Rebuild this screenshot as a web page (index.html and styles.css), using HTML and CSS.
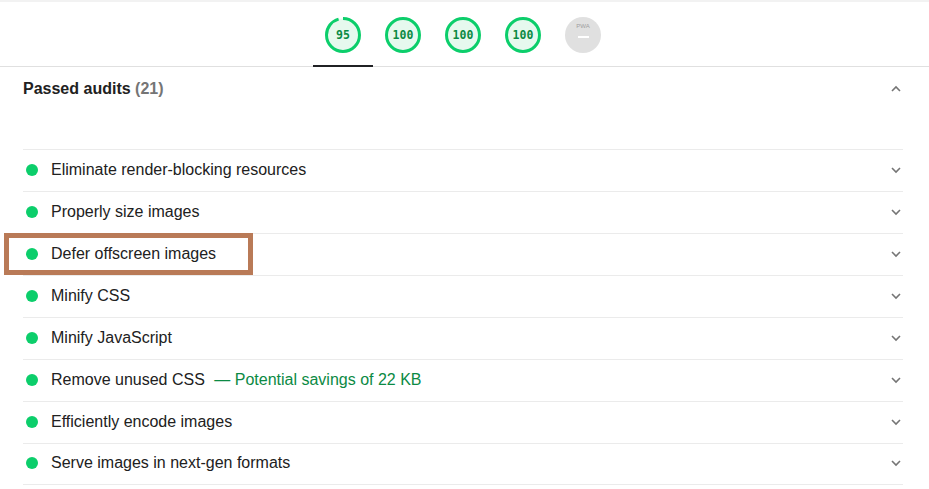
FILE: index.html
```html
<!DOCTYPE html>
<html>
<head>
<meta charset="utf-8">
<link rel="stylesheet" href="styles.css">
</head>
<body>
<div class="topstrip"></div>
<nav class="gauges">
  <div class="gauge-tab active">
    <svg class="gauge" viewBox="0 0 36 36" width="36" height="36">
      <circle cx="18" cy="18" r="16.5" fill="#e6f9ee"/>
      <circle cx="18" cy="18" r="16.5" fill="none" stroke="#0cce6b" stroke-width="3" stroke-dasharray="98.5 200" transform="rotate(-90 18 18)"/>
    </svg>
    <span class="gauge-num">95</span>
  </div>
  <div class="gauge-tab">
    <svg class="gauge" viewBox="0 0 36 36" width="36" height="36">
      <circle cx="18" cy="18" r="16.5" fill="#e6f9ee" stroke="#0cce6b" stroke-width="3"/>
    </svg>
    <span class="gauge-num">100</span>
  </div>
  <div class="gauge-tab">
    <svg class="gauge" viewBox="0 0 36 36" width="36" height="36">
      <circle cx="18" cy="18" r="16.5" fill="#e6f9ee" stroke="#0cce6b" stroke-width="3"/>
    </svg>
    <span class="gauge-num">100</span>
  </div>
  <div class="gauge-tab">
    <svg class="gauge" viewBox="0 0 36 36" width="36" height="36">
      <circle cx="18" cy="18" r="16.5" fill="#e6f9ee" stroke="#0cce6b" stroke-width="3"/>
    </svg>
    <span class="gauge-num">100</span>
  </div>
  <div class="gauge-tab">
    <div class="pwa">
      <span class="pwa-label">PWA</span>
      <span class="pwa-dash"></span>
    </div>
  </div>
</nav>

<section class="audits">
  <header class="audits-head">
    <h2 class="audits-title">Passed audits <span class="count">(21)</span></h2>
    <svg class="chev" width="12" height="8" viewBox="0 0 12 8"><path d="M2 6 L6 2 L10 6" fill="none" stroke="#757575" stroke-width="1.6"/></svg>
  </header>
  <ul class="audit-list">
    <li class="audit"><span class="dot"></span><span class="label">Eliminate render-blocking resources</span><svg class="chev" width="12" height="8" viewBox="0 0 12 8"><path d="M2 2 L6 6 L10 2" fill="none" stroke="#757575" stroke-width="1.6"/></svg></li>
    <li class="audit"><span class="dot"></span><span class="label">Properly size images</span><svg class="chev" width="12" height="8" viewBox="0 0 12 8"><path d="M2 2 L6 6 L10 2" fill="none" stroke="#757575" stroke-width="1.6"/></svg></li>
    <li class="audit highlighted"><span class="dot"></span><span class="label">Defer offscreen images</span><svg class="chev" width="12" height="8" viewBox="0 0 12 8"><path d="M2 2 L6 6 L10 2" fill="none" stroke="#757575" stroke-width="1.6"/></svg><span class="highlight-box"></span></li>
    <li class="audit"><span class="dot"></span><span class="label">Minify CSS</span><svg class="chev" width="12" height="8" viewBox="0 0 12 8"><path d="M2 2 L6 6 L10 2" fill="none" stroke="#757575" stroke-width="1.6"/></svg></li>
    <li class="audit"><span class="dot"></span><span class="label">Minify JavaScript</span><svg class="chev" width="12" height="8" viewBox="0 0 12 8"><path d="M2 2 L6 6 L10 2" fill="none" stroke="#757575" stroke-width="1.6"/></svg></li>
    <li class="audit"><span class="dot"></span><span class="label">Remove unused CSS <span class="savings">— Potential savings of 22 KB</span></span><svg class="chev" width="12" height="8" viewBox="0 0 12 8"><path d="M2 2 L6 6 L10 2" fill="none" stroke="#757575" stroke-width="1.6"/></svg></li>
    <li class="audit"><span class="dot"></span><span class="label">Efficiently encode images</span><svg class="chev" width="12" height="8" viewBox="0 0 12 8"><path d="M2 2 L6 6 L10 2" fill="none" stroke="#757575" stroke-width="1.6"/></svg></li>
    <li class="audit"><span class="dot"></span><span class="label">Serve images in next-gen formats</span><svg class="chev" width="12" height="8" viewBox="0 0 12 8"><path d="M2 2 L6 6 L10 2" fill="none" stroke="#757575" stroke-width="1.6"/></svg></li>
  </ul>
</section>
</body>
</html>
```
FILE: styles.css
```css
* { box-sizing: border-box; }
html, body { margin: 0; padding: 0; background: #fff; }
body {
  font-family: "Liberation Sans", Arial, sans-serif;
  color: #212121;
  font-size: 16px;
  overflow: hidden;
}
.topstrip { height: 2px; background: #f2f2f2; }
.gauges {
  display: flex;
  justify-content: center;
  padding-right: 3px;
  border-bottom: 1px solid #e0e0e0;
  height: 65px;
}
.gauge-tab {
  width: 60px;
  position: relative;
  display: flex;
  justify-content: center;
  padding-top: 15px;
}
.gauge-tab.active { border-bottom: 2px solid #202124; margin-bottom: -1px; }
.gauge { display: block; }
.gauge-num {
  position: absolute;
  top: 15px;
  left: 0;
  width: 60px;
  height: 36px;
  line-height: 36px;
  text-align: center;
  font-family: "DejaVu Sans Mono", "Liberation Mono", monospace;
  font-size: 11.5px;
  font-weight: bold;
  color: #0b8a44;
}
.pwa {
  width: 36px;
  height: 36px;
  border-radius: 50%;
  background: #e0e0e0;
  display: flex;
  flex-direction: column;
  align-items: center;
  padding-top: 6px;
}
.pwa-label {
  font-size: 6px;
  line-height: 7px;
  color: #9e9e9e;
  font-family: "Liberation Sans", sans-serif;
}
.pwa-dash {
  width: 11px;
  height: 2px;
  background: #fff;
  margin-top: 6px;
}
.audits { padding: 0 26px 0 23px; }
.audits-head {
  display: flex;
  align-items: center;
  justify-content: space-between;
  height: 82px;
  padding-bottom: 40px;
  padding-top: 2px;
}
.audits-title {
  margin: 0;
  font-size: 16px;
  font-weight: bold;
  color: #212121;
}
.count { color: #757575; }
.chev { display: block; margin-right: 1px; }
.audit-list { list-style: none; margin: 0; padding: 0; }
.audit {
  position: relative;
  display: flex;
  align-items: center;
  height: 42px;
  padding-bottom: 2px;
  border-top: 1px solid #ebebeb;
}
.audit:last-child { border-bottom: 1px solid #ebebeb; }
.dot {
  width: 12px;
  height: 12px;
  border-radius: 50%;
  background: #0cce6b;
  margin-left: 3px;
  margin-right: 13px;
  flex: none;
}
.label { flex: 1; font-size: 16px; color: #212121; }
.savings { color: #0b8a44; margin-left: 5px; }
.highlight-box {
  position: absolute;
  left: -19px;
  top: -1px;
  width: 249px;
  height: 42px;
  border: 5px solid #b97a57;
  pointer-events: none;
}
```
